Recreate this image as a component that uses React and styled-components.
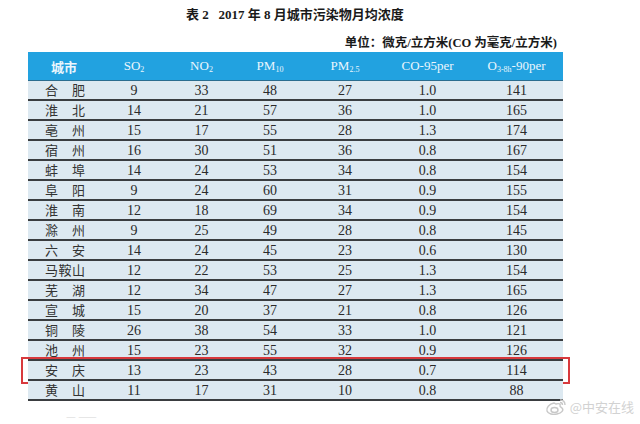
import React from "react";
import styled, { createGlobalStyle } from "styled-components";

const GlobalStyle = createGlobalStyle`
  html, body {
    margin: 0;
    padding: 0;
    background: #ffffff;
  }
  body {
    font-family: "Liberation Serif", "Noto Sans CJK SC", serif;
    color: #222;
  }
`;

const rows = [
  ["合肥", 9, 33, 48, 27, "1.0", 141],
  ["淮北", 14, 21, 57, 36, "1.0", 165],
  ["亳州", 15, 17, 55, 28, "1.3", 174],
  ["宿州", 16, 30, 51, 36, "0.8", 167],
  ["蚌埠", 14, 24, 53, 34, "0.8", 154],
  ["阜阳", 9, 24, 60, 31, "0.9", 155],
  ["淮南", 12, 18, 69, 34, "0.9", 154],
  ["滁州", 9, 25, 49, 28, "0.8", 145],
  ["六安", 14, 24, 45, 23, "0.6", 130],
  ["马鞍山", 12, 22, 53, 25, "1.3", 154],
  ["芜湖", 12, 34, 47, 27, "1.3", 165],
  ["宣城", 15, 20, 37, 21, "0.8", 126],
  ["铜陵", 26, 38, 54, 33, "1.0", 121],
  ["池州", 15, 23, 55, 32, "0.9", 126],
  ["安庆", 13, 23, 43, 28, "0.7", 114],
  ["黄山", 11, 17, 31, 10, "0.8", 88],
];

const cols = "72px 68px 67px 70px 80px 85px 93px";

const Page = styled.div`
  position: relative;
  width: 640px;
  height: 424px;
  overflow: hidden;
  padding-top: 7px;
  box-sizing: border-box;
`;

const Title = styled.h1`
  margin: 0 0 0 186px;
  font-size: 13px;
  line-height: 16px;
  font-weight: 700;
  color: #1a1a1a;
  font-family: "Liberation Serif", "Noto Sans CJK SC", serif;
`;

const Unit = styled.div`
  margin: 12px 0 0 0;
  width: 557px;
  text-align: right;
  font-size: 12.5px;
  line-height: 16px;
  font-weight: 700;
  color: #1a1a1a;
`;

const Table = styled.div`
  margin: 1px 0 0 28px;
  width: 535px;
`;

const HeaderRow = styled.div`
  display: grid;
  grid-template-columns: ${cols};
  height: 28px;
  align-items: center;
  background: #22a2e0;
  color: #eaf6fd;
  font-size: 13px;
  border-bottom: 1px solid #2b6d8f;
`;

const HeadCell = styled.div`
  text-align: center;
  white-space: nowrap;
  font-family: ${(p) => (p.cjk ? '"Noto Sans CJK SC", sans-serif' : '"Liberation Serif", serif')};
  font-weight: ${(p) => (p.cjk ? 700 : 400)};
  sub {
    font-size: 8px;
    vertical-align: -2px;
    line-height: 0;
  }
`;

const Row = styled.div`
  position: relative;
  display: grid;
  grid-template-columns: ${cols};
  height: 20px;
  box-sizing: border-box;
  align-items: center;
  background: #dde9f1;
  border-bottom: 2px solid #3a3d40;
  font-size: 14px;
  color: #2a2a2a;

  ${(p) =>
    p.marked &&
    `
    &::after {
      content: "";
      position: absolute;
      left: -7px;
      right: -7px;
      top: -4px;
      bottom: -5px;
      border: 2px solid #d8393d;
      pointer-events: none;
    }
  `}
`;

const Cell = styled.div`
  text-align: ${(p) => (p.left ? "left" : "center")};
  line-height: 18px;
  white-space: nowrap;
`;

const City = styled.span`
  display: inline-block;
  width: 40px;
  margin-left: 17px;
  text-align: justify;
  text-align-last: justify;
  font-family: "Noto Sans CJK SC", sans-serif;
  font-size: 13px;
  color: #333;
`;

const Watermark = styled.div`
  position: absolute;
  right: 6px;
  bottom: 8px;
  display: flex;
  align-items: center;
  gap: 3px;
  color: #d2d2d2;
  font-family: "Noto Sans CJK SC", sans-serif;
  font-size: 13px;
`;

const Faint = styled.div`
  position: absolute;
  left: 66px;
  bottom: 2px;
  line-height: 12px;
  color: #e2e2e2;
  font-family: "Noto Sans CJK SC", sans-serif;
  font-size: 11px;
`;

const WeiboLogo = () => (
  <svg width="22" height="18" viewBox="0 0 22 18" fill="none" stroke="#c8c8c8" strokeWidth="1.4">
    <path d="M9 5 C4 6 1 10 2 13 C3 16 8 17 12 16 C17 15 19 12 17 10 C16 9 15 9 15 8 C16 6 14 5 11 6 C10 6 10 5 9 5 Z" />
    <ellipse cx="9.5" cy="12" rx="3.5" ry="2.5" />
    <path d="M15 2 C18 2 20 4 20 7" />
    <path d="M15 4.5 C16.5 4.5 17.5 5.5 17.5 7" />
  </svg>
);

const App = () => (
  <Page>
    <GlobalStyle />
    <Title>表 2&nbsp;&nbsp; 2017 年 8 月城市污染物月均浓度</Title>
    <Unit>单位：微克/立方米(CO 为毫克/立方米)</Unit>
    <Table>
      <HeaderRow>
        <HeadCell cjk>城市</HeadCell>
        <HeadCell>SO<sub>2</sub></HeadCell>
        <HeadCell>NO<sub>2</sub></HeadCell>
        <HeadCell>PM<sub>10</sub></HeadCell>
        <HeadCell>PM<sub>2.5</sub></HeadCell>
        <HeadCell>CO-95per</HeadCell>
        <HeadCell>O<sub>3-8h</sub>-90per</HeadCell>
      </HeaderRow>
      {rows.map((r) => (
        <Row key={r[0]} marked={r[0] === "安庆"}>
          <Cell left>
            <City>{r[0].length === 2 ? r[0].split("").join(" ") : r[0]}</City>
          </Cell>
          {r.slice(1).map((v, i) => (
            <Cell key={i}>{v}</Cell>
          ))}
        </Row>
      ))}
    </Table>
    <Faint>— ——</Faint>
    <Watermark>
      <WeiboLogo />
      <span>@中安在线</span>
    </Watermark>
  </Page>
);

export default App;
